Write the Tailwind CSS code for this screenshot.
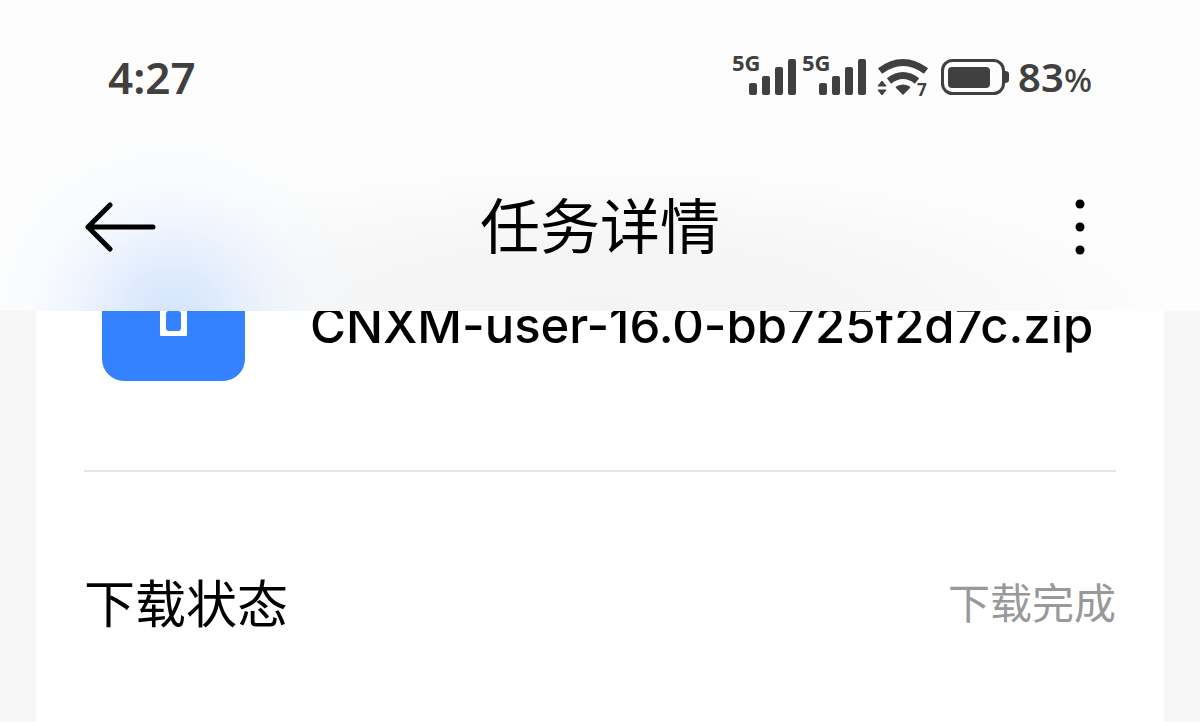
<!DOCTYPE html>
<html lang="zh-CN">
<head>
    <meta charset="UTF-8">
    <meta name="viewport" content="width=device-width, initial-scale=1.0">
    <title>任务详情</title>
    <script src="https://cdn.jsdelivr.net/npm/@tailwindcss/browser@4"></script>
</head>
<body class="bg-[#f7f7f7] min-h-screen flex flex-col text-black overflow-x-hidden font-['Noto_Sans','Noto_Sans_CJK_SC',sans-serif]">
    <header class="relative z-10 bg-[#fdfdfd] bg-[radial-gradient(circle_at_172px_320px,#d3e4fd_0px,#d9e8fed0_50px,#e6effe90_95px,#f0f6ff50_140px,transparent_200px),radial-gradient(ellipse_48%_150px_at_50%_100%,#f4f4f4_0%,#f6f6f6_50%,transparent_100%)]">
        <!-- status bar -->
        <div class="flex items-center justify-between h-[154px] px-[108px] text-[#404040]">
            <time class="text-[44px] leading-none font-semibold">4:27</time>
            <div class="flex items-center">
                <svg class="w-[280px] h-[66px]" viewBox="0 -8 280 66" fill="currentColor" role="img" aria-label="5G 5G Wi-Fi 7">
                    <text x="2" y="19" font-size="22" font-weight="700">5G</text>
                    <rect x="19" y="31" width="8" height="12" rx="2"/>
                    <rect x="32" y="24" width="8" height="19" rx="2"/>
                    <rect x="45" y="15" width="8" height="28" rx="2"/>
                    <rect x="58" y="7" width="8" height="36" rx="2"/>
                    <text x="72" y="19" font-size="22" font-weight="700">5G</text>
                    <rect x="89" y="31" width="8" height="12" rx="2"/>
                    <rect x="102" y="24" width="8" height="19" rx="2"/>
                    <rect x="115" y="15" width="8" height="28" rx="2"/>
                    <rect x="128" y="7" width="8" height="36" rx="2"/>
                    <path d="M150 19Q173 2 196 19" fill="none" stroke="currentColor" stroke-width="7"/>
                    <path d="M159 29Q173 18 187 29" fill="none" stroke="currentColor" stroke-width="7"/>
                    <path d="M173 43l-7-7q-1-1 1-2 6-3 12 0 2 1 1 2z"/>
                    <path d="M152 29l4 5h-8zM148 38h8l-4 5z" stroke="currentColor" stroke-width="1" stroke-linejoin="round"/>
                    <text x="187" y="44" font-size="17" font-weight="700">7</text>
                    <rect x="212.500" y="8.500" width="61" height="33" rx="10" fill="none" stroke="currentColor" stroke-width="3"/>
                    <rect x="218" y="15" width="42" height="21" rx="4"/>
                    <path d="M275 19q4 0 4 3v6q0 3-4 3z"/>
                </svg>
                <span class="pl-2 text-[40px] leading-none font-semibold">83<span class="text-[33px] font-medium">%</span></span>
            </div>
        </div>
        <!-- title bar -->
        <div class="flex items-start justify-between h-[157px] pt-10 px-[84px]">
            <button type="button" aria-label="返回" class="py-2">
                <svg class="w-[72px] h-[50px]" viewBox="0 0 72 50" fill="none" stroke="black" stroke-width="5" stroke-linecap="round" stroke-linejoin="round">
                    <path d="M26 3L4 25l22 22M4 25h65"/>
                </svg>
            </button>
            <h1 class="text-[60px] leading-16">任务详情</h1>
            <button type="button" aria-label="更多" class="py-1">
                <svg class="w-[72px] h-[60px]" viewBox="0 0 72 60" fill="black">
                    <circle cx="36" cy="6" r="4.500"/>
                    <circle cx="36" cy="29" r="4.500"/>
                    <circle cx="36" cy="52" r="4.500"/>
                </svg>
            </button>
        </div>
    </header>
    <main class="flex-grow bg-white mx-9 px-12 -mt-[74px]">
        <section class="flex items-start h-[235px] pl-[18px] border-b-2 border-[#e5e5e5]">
            <svg class="w-36 h-36 shrink-0" viewBox="0 0 144 144">
                <rect width="143" height="144" rx="22" fill="#3482ff"/>
                <path d="M59 98V60h25v38z" fill="white" stroke="white" stroke-width="2" stroke-linejoin="round"/>
                <rect x="64" y="74" width="15" height="20" rx="3" fill="#3482ff"/>
            </svg>
            <p class="pl-16 pt-14 text-[49px] leading-[66px] font-medium whitespace-nowrap font-['Inter','Noto_Sans_CJK_SC',sans-serif]">CNXM-user-16.0-bb725f2d7c.zip</p>
        </section>
        <dl class="flex items-center justify-between h-[262px]">
            <dt class="text-[51px] leading-16">下载状态</dt>
            <dd class="text-[42px] leading-16 text-[#999999]">下载完成</dd>
        </dl>
    </main>
</body>
</html>
